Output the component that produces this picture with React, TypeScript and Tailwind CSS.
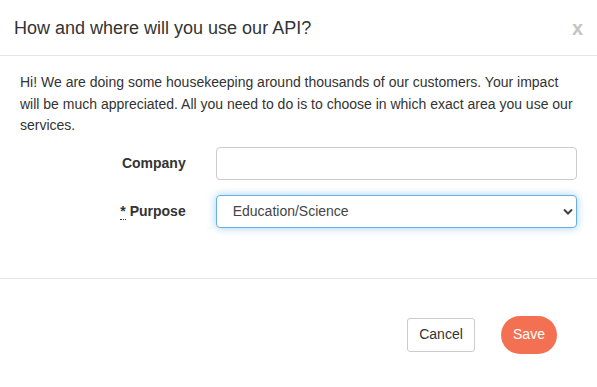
export default function App() {
  return (
    <div className="min-h-[387px] w-[597px] bg-white font-['Liberation_Sans',Arial,sans-serif] text-[#333]">
      <div className="flex items-center justify-between border-b border-[#e5e5e5] pl-[14px] pr-[14px] h-[56px]">
        <h4 className="text-[18px] leading-none">How and where will you use our API?</h4>
        <button className="text-[20px] font-bold leading-none text-[#c4c4c4]">x</button>
      </div>
      <div className="px-[20px] pt-[16px] pb-[50px] border-b border-[#e5e5e5]">
        <p className="text-[14px] leading-[21.5px]">
          Hi! We are doing some housekeeping around thousands of our customers. Your impact will be much
          appreciated. All you need to do is to choose in which exact area you use our services.
        </p>
        <div className="mt-[10px] flex flex-col gap-[15px]">
          <div className="flex items-center">
            <label className="w-[166px] text-right text-[14px] font-bold">Company</label>
            <input
              type="text"
              className="ml-[30px] h-[33px] w-[362px] rounded-[4px] border border-[#ccc] px-3 text-[14px] outline-none"
            />
          </div>
          <div className="flex items-center">
            <label className="w-[166px] text-right text-[14px] font-bold">
              <abbr title="required" className="no-underline border-b border-dotted border-[#333] cursor-help">*</abbr>{" "}
              Purpose
            </label>
            <div className="relative ml-[30px] w-[362px]">
              <select
                defaultValue="edu"
                className="h-[33px] w-full appearance-none rounded-[4px] border border-[#66afe9] bg-white pl-[16px] pr-8 text-[14px] text-[#444] shadow-[0_0_8px_rgba(102,175,233,0.6)] outline-none"
              >
                <option value="edu">Education/Science</option>
              </select>
              <svg
                className="pointer-events-none absolute right-[4px] top-[13px]"
                width="10"
                height="7"
                viewBox="0 0 10 7"
              >
                <path d="M1 1.5 L5 5.5 L9 1.5" fill="none" stroke="#444" strokeWidth="2" />
              </svg>
            </div>
          </div>
        </div>
      </div>
      <div className="flex items-center justify-end gap-[26px] pr-[40px] pt-[37px]">
        <button className="h-[34px] w-[68px] rounded-[3px] border border-[#ccc] bg-white text-[14px] text-[#333]">
          Cancel
        </button>
        <button className="h-[38px] w-[56px] rounded-full bg-[#f37152] text-[14px] text-white">Save</button>
      </div>
    </div>
  );
}
